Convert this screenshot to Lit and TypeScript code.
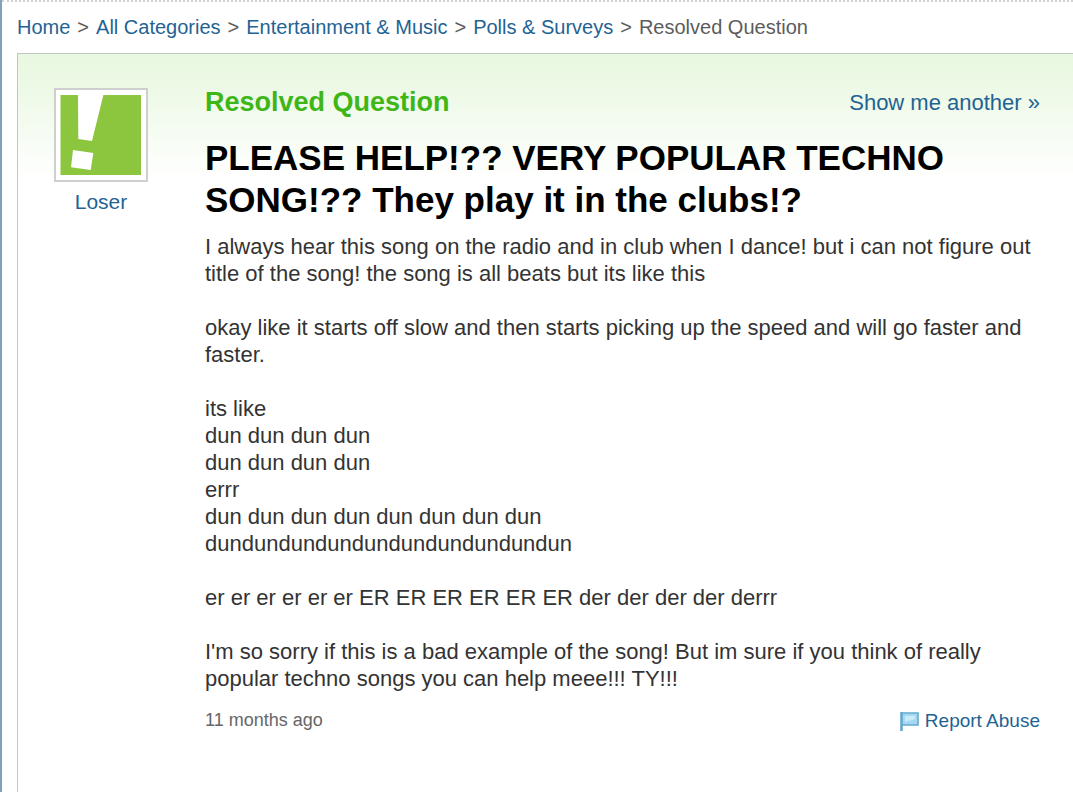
import { LitElement, html, css } from "lit";
import { customElement } from "lit/decorators.js";

const categories = ["Home", "All Categories", "Entertainment & Music", "Polls & Surveys"];

const question = `I always hear this song on the radio and in club when I dance! but i can not figure out title of the song! the song is all beats but its like this

okay like it starts off slow and then starts picking up the speed and will go faster and faster.

its like
dun dun dun dun
dun dun dun dun
errr
dun dun dun dun dun dun dun dun
dundundundundundundundundundun

er er er er er er ER ER ER ER ER ER der der der der derrr

I'm so sorry if this is a bad example of the song! But im sure if you think of really popular techno songs you can help meee!!! TY!!!`;

@customElement("app-root")
export class AppRoot extends LitElement {
  static styles = css`
    :host {
      display: flex;
      flex-direction: column;
      box-sizing: border-box;
      min-height: 100vh;
      padding-left: 15px;
      border-left: 2px solid #7fa3bd;
      background: #fff;
      color: #333;
      font-family: "Liberation Sans", Arial, sans-serif;
      font-size: 22px;
      line-height: 27px;
    }
    :host::before {
      content: "";
      margin-left: -15px;
      border-top: 2px dotted #d2d2d2;
    }
    a { color: #1f6393; text-decoration: none; }
    a:hover { text-decoration: underline; }
    .crumbs {
      display: flex;
      flex-wrap: wrap;
      gap: 0 7px;
      padding: 12px 0 13px;
      font-size: 20px;
      line-height: 26px;
      color: #5c5c5c;
    }
    .card {
      flex: 1;
      display: flex;
      gap: 57px;
      padding: 34px 33px 32px 36px;
      border: solid #c3c7c1;
      border-width: 1px 0 0 1px;
      background: linear-gradient(#e9f8e1, #ecf9e5 30px, #fff 126px) padding-box;
    }
    .user { width: 94px; flex: none; text-align: center; font-size: 21px; }
    .avatar { display: block; width: 94px; height: 94px; margin-bottom: 6px; }
    .body { flex: 1; min-width: 0; }
    .row { display: flex; justify-content: space-between; align-items: center; }
    .status { margin: 0; font-size: 27px; line-height: 28px; color: #3fb618; }
    h1 { margin: 21px 0 12px; font-size: 35px; line-height: 42px; color: #000; }
    .text { margin: 0 0 15px; white-space: pre-wrap; }
    .foot { font-size: 18px; color: #666; }
    .report { display: flex; align-items: center; gap: 6px; font-size: 19px; }
  `;

  render() {
    return html`
      <nav class="crumbs" aria-label="Breadcrumb">
        ${categories.map((name) => html`<a href="#">${name}</a><span>&gt;</span>`)}
        <span>Resolved Question</span>
      </nav>
      <main class="card">
        <aside class="user">
          <svg class="avatar" viewBox="0 0 94 94" aria-hidden="true">
            <rect x="1" y="1" width="92" height="92" fill="#fff" stroke="#cfcfcf" stroke-width="2" />
            <rect x="6.5" y="7" width="80.5" height="80" fill="#8cc63f" />
            <path d="M24 6.5H49.5L38 53L24.3 51ZM19 62L39.3 65L36.7 82L17 79.3Z" fill="#fff" />
          </svg>
          <a href="#">Loser</a>
        </aside>
        <article class="body">
          <div class="row">
            <h2 class="status">Resolved Question</h2>
            <a href="#">Show me another »</a>
          </div>
          <h1>PLEASE HELP!?? VERY POPULAR TECHNO SONG!?? They play it in the clubs!?</h1>
          <p class="text">${question}</p>
          <div class="row foot">
            <span>11 months ago</span>
            <a class="report" href="#">
              <svg width="20" height="20" viewBox="0 0 20 20" aria-hidden="true">
                <path d="M2.5 1V20" stroke="#5fa5c9" stroke-width="2.5" />
                <path d="M3 2H19V14H3Z" fill="#a5d9f1" stroke="#64abd0" stroke-width="1.6" />
                <path d="M6 5H16V8L6 11Z" fill="#c9ebf8" />
              </svg>
              Report Abuse
            </a>
          </div>
        </article>
      </main>
    `;
  }
}
